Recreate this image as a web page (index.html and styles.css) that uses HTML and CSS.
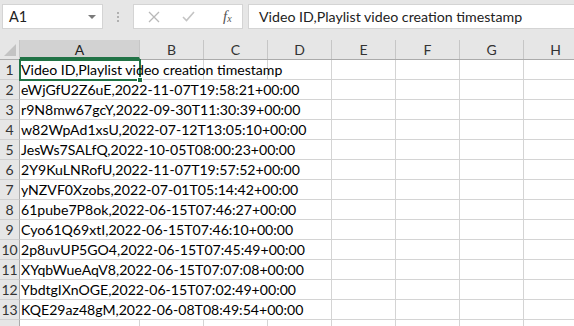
FILE: index.html
```html
<!DOCTYPE html>
<html>
<head>
<meta charset="utf-8">
<link rel="stylesheet" href="styles.css">
</head>
<body>
<div class="app">
  <div class="fbar">
    <div class="namebox"><span class="ref">A1</span><svg class="dd" width="8" height="5" viewBox="0 0 8 5"><path d="M0 0H8L4 4Z" fill="#7a7a7a"/></svg></div>
    <div class="dots"><i></i><i></i><i></i></div>
    <div class="fbtns">
      <svg class="ic" width="12" height="12" viewBox="0 0 12 12"><path d="M1 1L11 11M11 1L1 11" stroke="#b8b8b8" stroke-width="1.3" fill="none"/></svg>
      <svg class="ic" width="13" height="11" viewBox="0 0 13 11"><path d="M1 6L4.5 9.5L12 1" stroke="#c4c4c4" stroke-width="1.6" fill="none"/></svg>
      <span class="fx">f<sub>x</sub></span>
    </div>
    <div class="finput">Video ID,Playlist video creation timestamp</div>
  </div>
  <div class="grid">
    <div class="hrow">
      <div class="corner"><svg width="12" height="12" viewBox="0 0 12 12"><path d="M12 0V12H0Z" fill="#c3c3c3"/></svg></div>
      <div class="ch ca sel">A</div><div class="ch">B</div><div class="ch">C</div><div class="ch">D</div><div class="ch">E</div><div class="ch">F</div><div class="ch">G</div><div class="ch">H</div>
    </div>
    <div class="row"><div class="rh">1</div><div class="c ca active"><span class="t">Video ID,Playlist video creation timestamp</span><i class="handle"></i></div><div class="c"></div><div class="c"></div><div class="c"></div><div class="c"></div><div class="c"></div><div class="c"></div><div class="c"></div></div>
    <div class="row"><div class="rh">2</div><div class="c ca"><span class="t">eWjGfU2Z6uE,2022-11-07T19:58:21+00:00</span></div><div class="c"></div><div class="c"></div><div class="c"></div><div class="c"></div><div class="c"></div><div class="c"></div><div class="c"></div></div>
    <div class="row"><div class="rh">3</div><div class="c ca"><span class="t">r9N8mw67gcY,2022-09-30T11:30:39+00:00</span></div><div class="c"></div><div class="c"></div><div class="c"></div><div class="c"></div><div class="c"></div><div class="c"></div><div class="c"></div></div>
    <div class="row"><div class="rh">4</div><div class="c ca"><span class="t">w82WpAd1xsU,2022-07-12T13:05:10+00:00</span></div><div class="c"></div><div class="c"></div><div class="c"></div><div class="c"></div><div class="c"></div><div class="c"></div><div class="c"></div></div>
    <div class="row"><div class="rh">5</div><div class="c ca"><span class="t">JesWs7SALfQ,2022-10-05T08:00:23+00:00</span></div><div class="c"></div><div class="c"></div><div class="c"></div><div class="c"></div><div class="c"></div><div class="c"></div><div class="c"></div></div>
    <div class="row"><div class="rh">6</div><div class="c ca"><span class="t">2Y9KuLNRofU,2022-11-07T19:57:52+00:00</span></div><div class="c"></div><div class="c"></div><div class="c"></div><div class="c"></div><div class="c"></div><div class="c"></div><div class="c"></div></div>
    <div class="row"><div class="rh">7</div><div class="c ca"><span class="t">yNZVF0Xzobs,2022-07-01T05:14:42+00:00</span></div><div class="c"></div><div class="c"></div><div class="c"></div><div class="c"></div><div class="c"></div><div class="c"></div><div class="c"></div></div>
    <div class="row"><div class="rh">8</div><div class="c ca"><span class="t">61pube7P8ok,2022-06-15T07:46:27+00:00</span></div><div class="c"></div><div class="c"></div><div class="c"></div><div class="c"></div><div class="c"></div><div class="c"></div><div class="c"></div></div>
    <div class="row"><div class="rh">9</div><div class="c ca"><span class="t">Cyo61Q69xtI,2022-06-15T07:46:10+00:00</span></div><div class="c"></div><div class="c"></div><div class="c"></div><div class="c"></div><div class="c"></div><div class="c"></div><div class="c"></div></div>
    <div class="row"><div class="rh">10</div><div class="c ca"><span class="t">2p8uvUP5GO4,2022-06-15T07:45:49+00:00</span></div><div class="c"></div><div class="c"></div><div class="c"></div><div class="c"></div><div class="c"></div><div class="c"></div><div class="c"></div></div>
    <div class="row"><div class="rh">11</div><div class="c ca"><span class="t">XYqbWueAqV8,2022-06-15T07:07:08+00:00</span></div><div class="c"></div><div class="c"></div><div class="c"></div><div class="c"></div><div class="c"></div><div class="c"></div><div class="c"></div></div>
    <div class="row"><div class="rh">12</div><div class="c ca"><span class="t">YbdtgIXnOGE,2022-06-15T07:02:49+00:00</span></div><div class="c"></div><div class="c"></div><div class="c"></div><div class="c"></div><div class="c"></div><div class="c"></div><div class="c"></div></div>
    <div class="row"><div class="rh">13</div><div class="c ca"><span class="t">KQE29az48gM,2022-06-08T08:49:54+00:00</span></div><div class="c"></div><div class="c"></div><div class="c"></div><div class="c"></div><div class="c"></div><div class="c"></div><div class="c"></div></div>
    <div class="row"><div class="rh"></div><div class="c ca"></div><div class="c"></div><div class="c"></div><div class="c"></div><div class="c"></div><div class="c"></div><div class="c"></div><div class="c"></div></div>
  </div>
</div>
</body>
</html>
```
FILE: styles.css
```css
* { box-sizing: border-box; }
html, body { margin: 0; padding: 0; }
body {
  width: 574px; height: 326px; overflow: hidden;
  background: #fff;
  font-family: "Lato", "Open Sans", sans-serif;
  font-size: 14px;
  color: #000;
}
.app { width: 574px; }
.fbar {
  height: 40px;
  background: #e6e6e6;
  display: flex;
  align-items: flex-start;
  padding: 4px 0 0 2px;
}
.namebox {
  width: 101px; height: 25px;
  background: #fff;
  border: 1px solid #d4d4d4;
  display: flex; align-items: center;
  padding: 0 6px;
  justify-content: space-between;
}
.ref { font-size: 14.5px; color: #222; }
.dd { margin-top: 1px; }
.dots {
  width: 30px; height: 25px;
  display: flex; flex-direction: column; align-items: center; justify-content: center; gap: 2px;
}
.dots i { width: 2px; height: 2px; background: #b0b0b0; display: block; }
.fbtns {
  width: 110px; height: 25px;
  background: #fff;
  border: 1px solid #d4d4d4;
  display: flex; align-items: center;
  padding: 0 0 0 14px;
}
.fbtns .ic:nth-child(1) { margin-right: 22px; }
.fbtns .ic:nth-child(2) { margin-right: 28px; }
.fx {
  font-family: "Liberation Serif", serif; font-style: italic; font-size: 15px; color: #555;
  line-height: 1;
}
.fx sub { font-size: 10px; vertical-align: -1px; }
.finput {
  flex: 1; height: 25px; margin-left: 5px;
  background: #fff;
  border: 1px solid #d4d4d4; border-right: none;
  padding: 0 0 0 10px;
  display: flex; align-items: center;
  font-size: 14.2px; color: #222;
  white-space: nowrap;
}
.grid { width: 600px; }
.hrow {
  display: flex; height: 20px;
  background: #e6e6e6;
  border-bottom: 1px solid #ababab;
}
.corner {
  width: 20px; height: 19px;
  display: flex; align-items: flex-end; justify-content: flex-end;
  padding: 0 3px 3px 0;
  border-right: 1px solid #c6c6c6;
}
.ch {
  width: 64px; flex: none;
  text-align: center; line-height: 19px;
  border-right: 1px solid #c6c6c6;
  color: #333; font-size: 14px;
}
.ch.ca { width: 120px; }
.ch.sel { background: #d2d2d2; border-bottom: 2px solid #217346; color: #222; }
.row { display: flex; height: 20px; }
.rh {
  width: 20px; flex: none;
  background: #e6e6e6;
  border-right: 1px solid #ababab;
  border-bottom: 1px solid #d0d0d0;
  text-align: center; line-height: 19px;
  color: #333; font-size: 14px;
}
.c {
  width: 64px; flex: none; height: 20px;
  border-right: 1px solid #d4d4d4;
  border-bottom: 1px solid #d4d4d4;
  position: relative;
}
.c.ca { width: 120px; }
.t {
  position: relative; z-index: 1;
  display: inline-block;
  background: #fff;
  white-space: nowrap;
  line-height: 19px;
  padding: 0 0 0 1px;
  font-size: 14.1px;
}
.active { outline: 2px solid #217346; outline-offset: -1px; z-index: 2; }
.active .t { background: transparent; }
.handle {
  position: absolute; right: -4px; bottom: -4px;
  width: 6px; height: 6px; background: #217346; border: 1px solid #fff;
  z-index: 3;
}
```
